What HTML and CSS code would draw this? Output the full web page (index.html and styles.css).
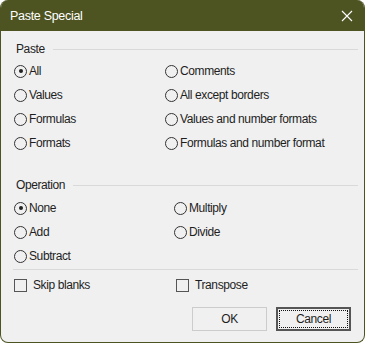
FILE: index.html
```html
<!DOCTYPE html>
<html lang="en">
<head>
    <meta charset="UTF-8">
    <meta name="viewport" content="width=device-width, initial-scale=1.0">
    <title>Paste Special</title>
    <link rel="stylesheet" href="styles.css">
</head>
<body>

<div class="window">
    <!-- Title bar -->
    <div class="titlebar">
        <span class="title">Paste Special</span>
        <svg class="close" width="12" height="12" viewBox="0 0 12 12">
            <path d="M1 1 L11 11 M11 1 L1 11" stroke="#ffffff" stroke-width="1.1" fill="none"/>
        </svg>
    </div>

    <div class="content">
        <!-- Paste group -->
        <div class="legend"><span>Paste</span><div class="rule"></div></div>
        <div class="options paste-grid">
            <label class="radio"><span class="dot checked"></span>All</label>
            <label class="radio"><span class="dot"></span>Comments</label>
            <label class="radio"><span class="dot"></span>Values</label>
            <label class="radio"><span class="dot"></span>All except borders</label>
            <label class="radio"><span class="dot"></span>Formulas</label>
            <label class="radio"><span class="dot"></span>Values and number formats</label>
            <label class="radio"><span class="dot"></span>Formats</label>
            <label class="radio"><span class="dot"></span>Formulas and number format</label>
        </div>

        <!-- Operation group -->
        <div class="legend op-legend"><span>Operation</span><div class="rule"></div></div>
        <div class="options op-grid">
            <label class="radio"><span class="dot checked"></span>None</label>
            <label class="radio"><span class="dot"></span>Multiply</label>
            <label class="radio"><span class="dot"></span>Add</label>
            <label class="radio"><span class="dot"></span>Divide</label>
            <label class="radio"><span class="dot"></span>Subtract</label>
        </div>

        <div class="separator"></div>

        <div class="checks">
            <label class="check"><span class="box"></span>Skip blanks</label>
            <label class="check"><span class="box"></span>Transpose</label>
        </div>

        <div class="buttons">
            <button class="btn">OK</button>
            <button class="btn default"><span class="focus">Cancel</span></button>
        </div>
    </div>
</div>

</body>
</html>
```

FILE: styles.css
```css
/* Dialog styling */
body {
    margin: 0;
    background: #ffffff;
    font-family: "Liberation Sans", Arial, sans-serif;
    font-size: 12px;
    letter-spacing: -0.4px;
    color: #1e1e1e;
}
.window {
    width: 365px;
    height: 343px;
    box-sizing: border-box;
    border: 1px solid #4e5322;
    border-top: none;
    border-radius: 8px;
    overflow: hidden;
    background: #f0f0f0;
    display: flex;
    flex-direction: column;
}
.titlebar {
    height: 31px;
    flex: none;
    background: #4e5322;
    color: #ffffff;
    display: flex;
    align-items: center;
    justify-content: space-between;
    padding: 0 11px 0 9px;
}
.title {
    font-size: 12.5px;
    letter-spacing: -0.3px;
}
.content {
    padding: 10px 6px 0 13px;
}
.legend {
    display: flex;
    align-items: center;
    height: 16px;
    color: #222222;
}
.legend span {
    padding: 0 8px 0 2px;
}
.legend .rule {
    flex: 1;
    height: 1px;
    background: #d9d9d9;
}
.op-legend {
    margin-top: 22px;
}
.options {
    display: grid;
    grid-auto-rows: 24px;
    margin-top: 2px;
}
.paste-grid {
    grid-template-columns: 151px 1fr;
}
.op-grid {
    grid-template-columns: 160px 1fr;
    margin-top: 3px;
}
.radio, .check {
    display: flex;
    align-items: center;
    white-space: nowrap;
}
.dot {
    width: 11px;
    height: 11px;
    border: 1px solid #333333;
    border-radius: 50%;
    margin-right: 2px;
    display: flex;
    align-items: center;
    justify-content: center;
}
.dot.checked::after {
    content: "";
    width: 4px;
    height: 4px;
    border-radius: 50%;
    background: #222222;
}
.separator {
    height: 1px;
    background: #d9d9d9;
    margin: 1px 0 0 -1px;
}
.checks {
    display: grid;
    grid-template-columns: 162px 1fr;
    height: 24px;
    margin-top: 3px;
}
.box {
    width: 11px;
    height: 11px;
    border: 1px solid #555555;
    margin: 0 6px 0 0;
}
.buttons {
    display: flex;
    justify-content: flex-end;
    gap: 9px;
    margin-top: 10px;
    padding-right: 7px;
}
.btn {
    width: 75px;
    height: 24px;
    font-family: inherit;
    font-size: 12px;
    letter-spacing: -0.4px;
    color: #1e1e1e;
    background: #f0f0f0;
    border: 1px solid #cccccc;
    padding: 0;
}
.btn.default {
    border: 1px solid #555555;
    box-shadow: inset 0 0 0 1px #555555;
    display: flex;
    align-items: center;
    justify-content: center;
}
.btn .focus {
    box-sizing: border-box;
    width: 69px;
    height: 18px;
    border: 1px dotted #111111;
    display: flex;
    align-items: center;
    justify-content: center;
}
```
